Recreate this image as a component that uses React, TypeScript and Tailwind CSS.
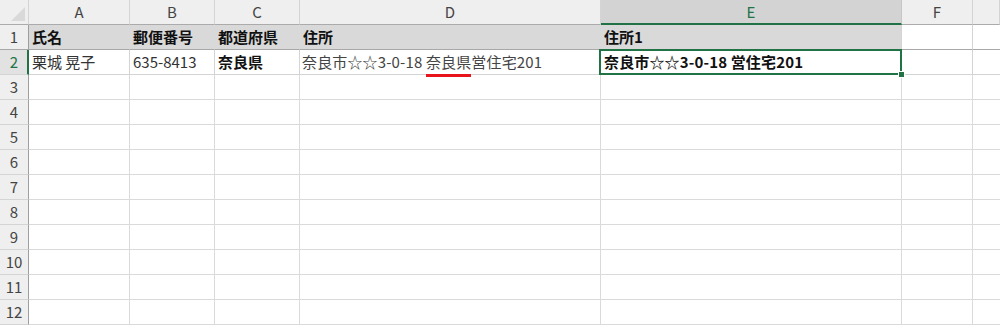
import React from "react";

const cols = ["A", "B", "C", "D", "E", "F", ""];

type Cell = { text?: React.ReactNode; bold?: boolean };

const headerRow: Cell[] = [
  { text: "氏名", bold: true },
  { text: "郵便番号", bold: true },
  { text: "都道府県", bold: true },
  { text: "住所", bold: true },
  { text: "住所1", bold: true },
];

const font = "font-['Noto_Sans_CJK_JP','Noto_Sans',sans-serif]";

function CornerCell() {
  return (
    <div className="relative h-[25px] border-r border-b border-r-[#d4d4d4] border-b-[#ababab] bg-[#efefef]">
      <svg className="absolute bottom-[3px] right-[3px]" width="14" height="14" viewBox="0 0 14 14">
        <polygon points="14,0 14,14 0,14" fill="#d9d9d9" />
      </svg>
    </div>
  );
}

function ColHeader({ label, active }: { label: string; active?: boolean }) {
  return (
    <div
      className={`flex h-[25px] items-center justify-center border-r text-[15px] ${
        active
          ? "border-b-2 border-r-[#c6c6c6] border-b-[#217346] bg-[#d3d3d3] pt-[1px] text-[#217346]"
          : "border-b border-r-[#d4d4d4] border-b-[#ababab] bg-[#efefef] text-[#444]"
      }`}
    >
      {label}
    </div>
  );
}

function RowHeader({ n, active, freeze }: { n: number; active?: boolean; freeze?: boolean }) {
  return (
    <div
      className={`flex h-[25px] items-center justify-center border-b text-[15px] ${
        freeze ? "border-b-[#a8a8a8]" : "border-b-[#d4d4d4]"
      } ${
        active
          ? "border-r-2 border-r-[#217346] bg-[#e2e2e2] pl-[1px] text-[#217346]"
          : "border-r border-r-[#9e9e9e] bg-[#efefef] text-[#444]"
      }`}
    >
      {n}
    </div>
  );
}

export default function App() {
  const emptyRows = [3, 4, 5, 6, 7, 8, 9, 10, 11, 12];

  return (
    <div className={`h-[325px] w-[1000px] overflow-hidden bg-white ${font}`}>
      <div className="grid grid-cols-[29px_101px_85px_85px_301px_301px_71px_1fr]">
        {/* column letters */}
        <CornerCell />
        {cols.map((c) => (
          <ColHeader key={c || "g"} label={c} active={c === "E"} />
        ))}

        {/* row 1: headings, frozen */}
        <RowHeader n={1} freeze />
        {headerRow.map((cell, i) => (
          <div
            key={i}
            className={`flex h-[25px] items-center border-b border-b-[#a8a8a8] bg-[#d9d9d9] pl-[3px] text-[15px] font-bold text-[#111] ${
              i === 4 ? "border-r border-r-[#d4d4d4]" : "border-r border-r-[#d9d9d9]"
            }`}
          >
            {cell.text}
          </div>
        ))}
        <div className="h-[25px] border-r border-b border-r-[#d4d4d4] border-b-[#a8a8a8]" />
        <div className="h-[25px] border-b border-b-[#a8a8a8]" />

        {/* row 2 */}
        <RowHeader n={2} active />
        <div className="flex h-[25px] items-center border-r border-b border-[#d4d4d4] pl-[3px] text-[15px] text-[#333]">
          栗城 晃子
        </div>
        <div className="flex h-[25px] items-center border-r border-b border-[#d4d4d4] pl-[3px] text-[15px] text-[#333]">
          635-8413
        </div>
        <div className="flex h-[25px] items-center border-r border-b border-[#d4d4d4] pl-[3px] text-[15px] font-bold text-[#111]">
          奈良県
        </div>
        <div className="flex h-[25px] items-center border-r border-b border-[#d4d4d4] pl-[2px] text-[15px] tracking-[0.15px] text-[#444]">
          <span className="whitespace-pre">
            奈良市☆☆3-0-18{" "}
            <span className="relative">
              奈良県
              <span className="absolute left-0 right-0 bottom-[-5px] h-[3px] bg-[#e8141b]" />
            </span>
            営住宅201
          </span>
        </div>
        <div className="relative flex h-[25px] items-center border-r border-b border-[#d4d4d4] pl-[3px] text-[15px] font-bold tracking-[0.15px] text-[#111]">
          奈良市☆☆3-0-18 営住宅201
          <div className="pointer-events-none absolute -left-[2px] -top-[1px] -right-[1px] -bottom-[1px] border-2 border-[#217346]" />
          <div className="absolute -bottom-[4px] -right-[4px] h-[7px] w-[7px] border border-white bg-[#217346]" />
        </div>
        <div className="h-[25px] border-r border-b border-[#d4d4d4]" />
        <div className="h-[25px] border-b border-[#d4d4d4]" />

        {/* empty rows */}
        {emptyRows.map((n) => (
          <React.Fragment key={n}>
            <RowHeader n={n} />
            {cols.map((c, i) => (
              <div
                key={c || "g"}
                className={`h-[25px] border-b border-[#dadada] ${i < cols.length - 1 ? "border-r" : ""}`}
              />
            ))}
          </React.Fragment>
        ))}
      </div>
    </div>
  );
}
